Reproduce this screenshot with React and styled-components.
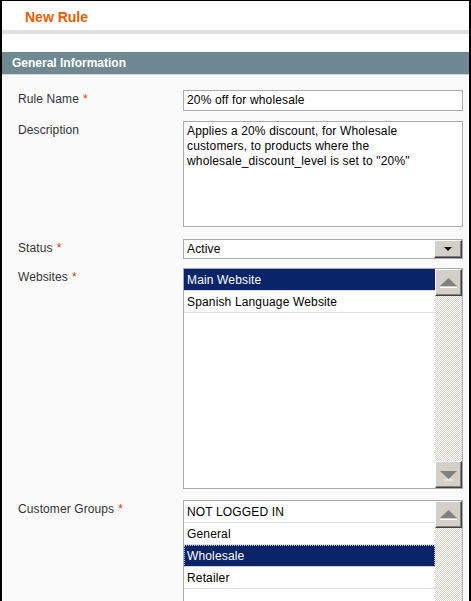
import React from 'react'
import styled, { createGlobalStyle } from 'styled-components'

const Global = createGlobalStyle`
  html, body { margin: 0; padding: 0; background: #fff; overflow: hidden; }
  body { font-family: "Liberation Sans", Arial, sans-serif; font-size: 12px; }
`;

const Frame = styled.div`
  width: 471px;
  height: 601px;
  box-sizing: border-box;
  border: solid #000;
  border-width: 1px 2px 0 2px;
  background: #fff;
  overflow: hidden;
`;

const Title = styled.h1`
  margin: 0;
  height: 33px;
  box-sizing: border-box;
  padding: 7px 0 0 23px;
  font-size: 14px;
  line-height: 18px;
  font-weight: bold;
  color: #eb5e00;
  border-bottom: 4px solid #dfdfdf;
`;

const Section = styled.div`
  margin-top: 18px;
`;

const SectionHead = styled.h2`
  margin: 0;
  height: 22px;
  padding-left: 10px;
  background: #6f8992;
  color: #fff;
  font-size: 12px;
  line-height: 22px;
  font-weight: bold;
`;

const Fieldset = styled.div`
  background: #fafafa;
  border-top: 1px solid #d6d6d6;
  padding: 15px 0 0 16px;
  height: 600px;
`;

const Row = styled.div`
  display: grid;
  grid-template-columns: 165px 280px;
  align-items: start;
  margin-bottom: ${p => p.$space}px;
`;

const Label = styled.label`
  color: #333;
  font-size: 12px;
  line-height: 15px;
  padding-top: 2px;
  letter-spacing: 0.1px;
  span { color: #eb340a; margin-left: 4px; }
`;

const Box = styled.div`
  box-sizing: border-box;
  background: #fff;
  border: 1px solid #aaa;
  color: #000;
  font-size: 12px;
  letter-spacing: 0.15px;
`;

const TextInput = styled(Box)`
  height: 21px;
  line-height: 19px;
  padding: 0 3px;
`;

const TextArea = styled(Box)`
  height: 106px;
  line-height: 15px;
  padding: 2px 3px;
`;

const SelectBox = styled(Box)`
  height: 20px;
  display: flex;
  align-items: center;
  padding-left: 3px;
  span { flex: 1; }
`;

const Bevel = styled.div`
  box-sizing: border-box;
  background: #d4d0c8;
  border: 1px solid;
  border-color: #fff #404040 #404040 #fff;
  box-shadow: inset -1px -1px 0 #808080;
  display: flex;
  align-items: center;
  justify-content: center;
`;

const DropButton = styled(Bevel)`
  width: 28px;
  height: 18px;
`;

const ListBox = styled(Box)`
  height: 221px;
  display: flex;
`;

const Options = styled.div`
  flex: 1;
`;

const Option = styled.div`
  box-sizing: border-box;
  height: 22px;
  line-height: 20px;
  padding: 1px 3px 0;
  border-bottom: 1px solid #dedede;
  background: ${p => (p.$selected ? '#0a246a' : '#fff')};
  color: ${p => (p.$selected ? '#fff' : '#000')};
  outline: ${p => (p.$focus ? '1px dotted #c8c8c8' : 'none')};
  outline-offset: -1px;
`;

const Scrollbar = styled.div`
  width: 27px;
  display: flex;
  flex-direction: column;
  justify-content: space-between;
  background: repeating-conic-gradient(#d4d0c8 0 25%, #fff 0 50%) 0 0 / 2px 2px;
`;

const ScrollButton = styled(Bevel)`
  width: 27px;
  height: 27px;
`;

const Arrow = ({ dir }) => (
  <svg width="19" height="12" viewBox="0 0 19 12">
    {dir === 'up' ? (
      <>
        <polygon points="1,9 9.5,1 18,9" fill="#808080" />
        <line x1="1" y1="10.5" x2="18" y2="10.5" stroke="#fff" />
      </>
    ) : (
      <>
        <polygon points="1,2 9.5,10 18,2" fill="#808080" />
        <line x1="5" y1="11" x2="14" y2="11" stroke="#fff" />
      </>
    )}
  </svg>
);

const List = ({ items, selected, focus }) => (
  <ListBox>
    <Options>
      {items.map(item => (
        <Option key={item} $selected={item === selected} $focus={focus && item === selected}>
          {item}
        </Option>
      ))}
    </Options>
    <Scrollbar>
      <ScrollButton><Arrow dir="up" /></ScrollButton>
      <ScrollButton><Arrow dir="down" /></ScrollButton>
    </Scrollbar>
  </ListBox>
);

export default function App() {
  return (
    <Frame>
      <Global />
      <Title>New Rule</Title>
      <Section>
        <SectionHead>General Information</SectionHead>
        <Fieldset>
          <Row $space={10}>
            <Label>Rule Name<span>*</span></Label>
            <TextInput>20% off for wholesale</TextInput>
          </Row>
          <Row $space={12}>
            <Label>Description</Label>
            <TextArea>
              Applies a 20% discount, for Wholesale<br />
              customers, to products where the<br />
              wholesale_discount_level is set to "20%"
            </TextArea>
          </Row>
          <Row $space={9}>
            <Label>Status<span>*</span></Label>
            <SelectBox>
              <span>Active</span>
              <DropButton>
                <svg width="8" height="4" viewBox="0 0 8 4"><polygon points="0,0 8,0 4,4" fill="#000" /></svg>
              </DropButton>
            </SelectBox>
          </Row>
          <Row $space={11}>
            <Label>Websites<span>*</span></Label>
            <List items={['Main Website', 'Spanish Language Website']} selected="Main Website" />
          </Row>
          <Row $space={0}>
            <Label>Customer Groups<span>*</span></Label>
            <List
              items={['NOT LOGGED IN', 'General', 'Wholesale', 'Retailer']}
              selected="Wholesale"
              focus
            />
          </Row>
        </Fieldset>
      </Section>
    </Frame>
  )
}
